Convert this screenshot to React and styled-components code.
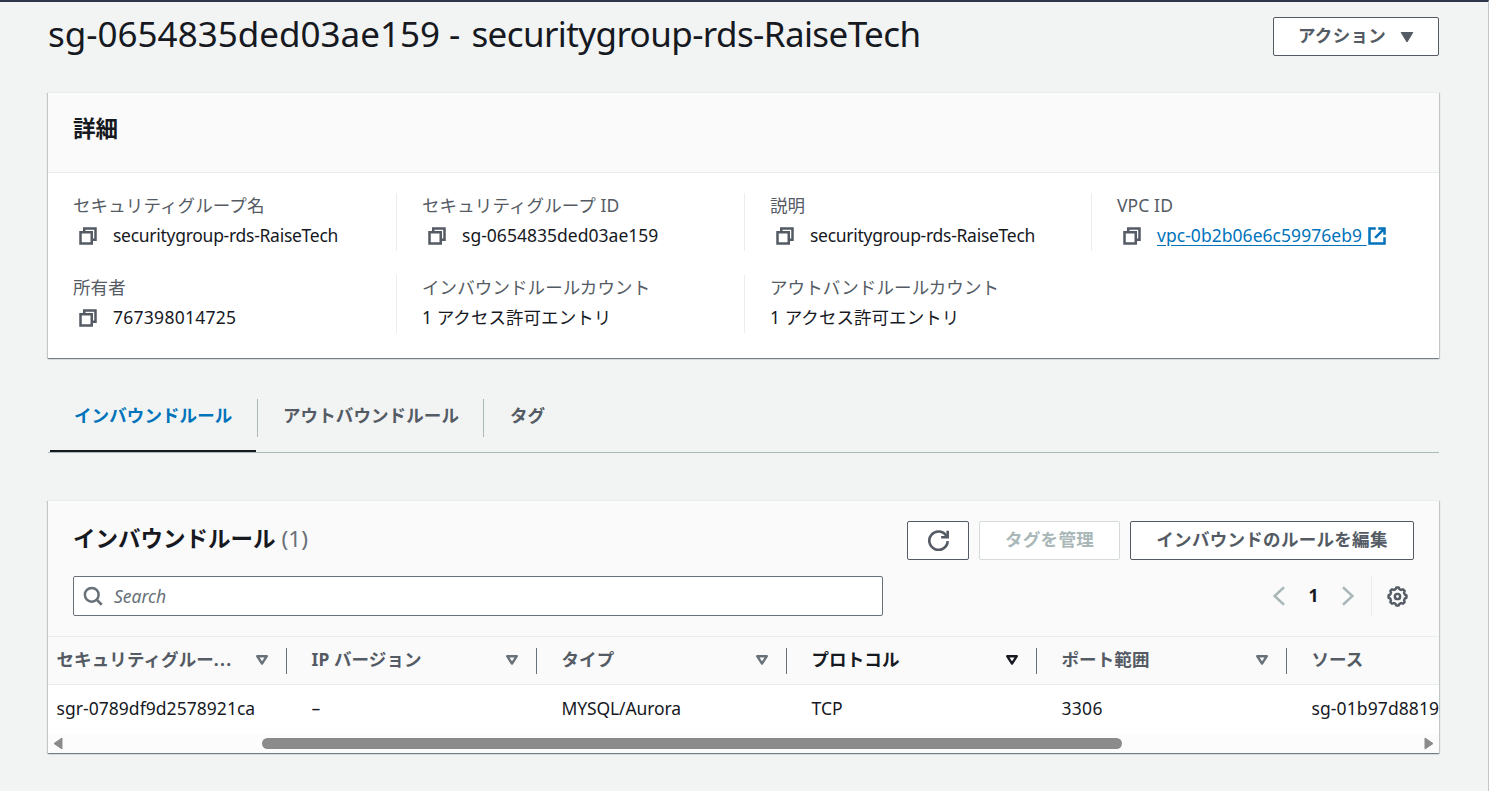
import React from "react";
import styled, { createGlobalStyle, css } from "styled-components";

const Global = createGlobalStyle`
  *, *::before, *::after { box-sizing: border-box; }
  html, body { margin: 0; height: 100%; overflow: hidden; }
  body {
    background: #f2f3f3;
    color: #16191f;
    font-family: "Noto Sans", "Noto Sans CJK JP", sans-serif;
    font-size: 17.5px;
    line-height: 26px;
  }
  h1, h2, p, dl, dt, dd { margin: 0; font-weight: 400; }
  button { font: inherit; }
  svg { flex: none; display: block; }
`;

const Page = styled.main`
  height: 791px;
  border-top: 2px solid #2d3646;
  border-right: 1px solid #bfc5c9;
  padding: 15px 49px 0 48px;
`;

const PageHeader = styled.header`
  display: flex;
  justify-content: space-between;
  align-items: flex-start;
  height: 75px;
`;

const PageTitle = styled.h1`
  font-size: 35px;
  line-height: 40px;
  margin-top: -3px;
  white-space: nowrap;
`;

const TitleName = styled.span`
  margin-left: 2px;
  letter-spacing: -0.6px;
`;

const Button = styled.button`
  display: flex;
  align-items: center;
  justify-content: center;
  gap: 14px;
  width: ${(p) => p.$width}px;
  height: 39px;
  padding: 0 0 ${(p) => (p.$icon ? 0 : 4)}px;
  background: #fff;
  border: 1px solid ${(p) => (p.disabled ? "#d5dbdb" : "#545b64")};
  border-radius: 2px;
  color: ${(p) => (p.disabled ? "#aab7b8" : "#545b64")};
  font-weight: 700;
  letter-spacing: 0.3px;
  white-space: nowrap;
`;

const Caret = styled.svg`
  position: relative;
  top: 2px;
`;

const Card = styled.section`
  background: #fff;
  border-top: 1px solid #eaeded;
  box-shadow: 0 1px 1px 0 rgba(0, 28, 36, 0.35), 1px 1px 1px 0 rgba(0, 28, 36, 0.15),
    -1px 1px 1px 0 rgba(0, 28, 36, 0.15);
`;

const CardHead = styled.header`
  height: 80px;
  padding: 23px 25px 0;
  background: #fafafa;
  border-bottom: 1px solid #eaeded;
`;

const CardTitle = styled.h2`
  font-size: 22.5px;
  line-height: 26px;
  padding-bottom: ${(p) => p.$lift || 0}px;
  font-weight: 700;
  white-space: nowrap;
`;

const Count = styled.span`
  margin-left: 6px;
  font-weight: 400;
  color: #687078;
`;

const DetailGrid = styled.dl`
  display: grid;
  grid-template-columns: 349px 348px 347px 1fr;
  row-gap: 24px;
  height: 185px;
  padding-top: 20px;
  overflow: hidden;
  align-content: start;
`;

const Detail = styled.div`
  height: 58px;
  padding-left: 25px;
  border-right: 1px solid ${(p) => (p.$last ? "transparent" : "#eaeded")};
`;

const Label = styled.dt`
  height: 30px;
  margin-top: -1px;
  margin-bottom: 1px;
  color: #545b64;
  letter-spacing: 0.1px;
  white-space: nowrap;
`;

const Value = styled.dd`
  display: flex;
  align-items: center;
  height: 26px;
  white-space: nowrap;
`;

const CopyButton = styled.span`
  display: flex;
  width: 40px;
  padding-left: 5px;
  color: #545b64;
`;

const Text = styled.span`
  padding-bottom: 2px;
  letter-spacing: ${(p) => p.$track || 0}px;
`;

const Link = styled.a`
  display: flex;
  align-items: center;
  color: #0073bb;
  text-decoration: underline;
  text-underline-offset: 3px;
`;

const TabBar = styled.nav`
  display: flex;
  margin-top: 40px;
  height: 55px;
  border-bottom: 1px solid #aab7b8;
  padding-left: 2px;
`;

const Tab = styled.a`
  width: ${(p) => p.$width}px;
  height: 54px;
  padding: 4px 0 0 ${(p) => p.$left || 24}px;
  font-weight: 700;
  letter-spacing: 0.1px;
  color: ${(p) => (p.$active ? "#0073bb" : "#545b64")};
  border-bottom: ${(p) => (p.$active ? "2px solid #16191f" : "0")};
`;

const TabDivider = styled.i`
  width: 1px;
  height: 38px;
  margin: 1px 2px 0 1px;
  background: #aab7b8;
`;

const TableCard = styled(Card)`
  margin-top: 47px;
  height: 253px;
  overflow: hidden;
`;

const TableHead = styled.header`
  height: 136px;
  padding: 20px 25px 0;
  background: #fafafa;
  border-bottom: 1px solid #eaeded;
`;

const Row = styled.div`
  display: flex;
  justify-content: space-between;
  align-items: center;
  margin-top: ${(p) => p.$top || 0}px;
`;

const Actions = styled.div`
  display: flex;
  gap: 10px;
`;

const SearchBox = styled.div`
  display: flex;
  align-items: center;
  gap: 11px;
  width: 810px;
  height: 40px;
  padding-left: 9px;
  background: #fff;
  border: 1px solid #687078;
  border-radius: 2px;
  color: #687078;
  font-style: italic;
`;

const Pager = styled.div`
  display: flex;
  align-items: center;
  height: 40px;
  color: #aab7b8;
`;

const PageNumber = styled.b`
  width: 49px;
  padding-bottom: 2px;
  text-align: center;
  color: #16191f;
`;

const Preferences = styled.span`
  display: flex;
  align-items: center;
  height: 40px;
  margin-left: 13px;
  padding: 0 6px 0 15px;
  border-left: 1px solid #eaeded;
  color: #545b64;
`;

const Grid = styled.div`
  display: grid;
  grid-template-columns: 239px repeat(4, 250px) 152px;
  height: ${(p) => (p.$head ? 48 : 49)}px;
  overflow: hidden;
  ${(p) =>
    p.$head &&
    css`
      background: #fafafa;
      border-bottom: 1px solid #eaeded;
      font-weight: 700;
    `}
`;

const Cell = styled.div`
  display: flex;
  align-items: center;
  justify-content: space-between;
  padding: 0 0 1px ${(p) => (p.$first ? 8.5 : 24.5)}px;
  white-space: nowrap;
`;

const HeadCell = styled(Cell)`
  padding-bottom: 0;
  color: ${(p) => (p.$sorted ? "#16191f" : "#545b64")};
`;

const HeadName = styled.span`
  padding-bottom: 4px;
  letter-spacing: 0.1px;
`;

const Ellipsis = styled.span`
  letter-spacing: 1.3px;
`;

const SortMark = styled.span`
  display: flex;
  align-items: center;
  width: 32px;
  height: 26px;
  padding-bottom: 1px;
  color: ${(p) => (p.$sorted ? "#16191f" : "#687078")};
  border-right: 1px solid #687078;
`;

const ScrollBar = styled.div`
  display: flex;
  align-items: center;
  justify-content: space-between;
  height: 19px;
  padding: 0 5px;
  background: #fcfcfc;
`;

const Thumb = styled.div`
  width: 860px;
  height: 11px;
  margin-right: 103px;
  border-radius: 6px;
  background: #8b8b8b;
`;

const Icon = ({ size = 20, children, width = 2 }) => (
  <svg width={size} height={size} viewBox="0 0 16 16" fill="none" stroke="currentColor" strokeWidth={width}>
    {children}
  </svg>
);

const Copy = () => (
  <CopyButton>
    <Icon>
      <path d="M2 5h9v9H2z" />
      <path d="M5 5V2h9v9h-3" />
    </Icon>
  </CopyButton>
);

const details = [
  { label: "セキュリティグループ名", value: "securitygroup-rds-RaiseTech", copy: true, track: -0.28 },
  { label: "セキュリティグループ ID", value: "sg-0654835ded03ae159", copy: true, track: 0.02 },
  { label: "説明", value: "securitygroup-rds-RaiseTech", copy: true, track: -0.28 },
  { label: "VPC ID", value: "vpc-0b2b06e6c59976eb9", copy: true, link: true, track: 0.04 },
  { label: "所有者", value: "767398014725", copy: true, track: 0.27 },
  { label: "インバウンドルールカウント", value: "1 アクセス許可エントリ", track: 0.05 },
  { label: "アウトバンドルールカウント", value: "1 アクセス許可エントリ", track: 0.05 },
];

const columns = [
  { name: "セキュリティグルー", cut: true, value: "sgr-0789df9d2578921ca", track: 0.04 },
  { name: "IP バージョン", value: "–" },
  { name: "タイプ", value: "MYSQL/Aurora", track: -0.12 },
  { name: "プロトコル", value: "TCP", sorted: true },
  { name: "ポート範囲", value: "3306", track: 0.3 },
  { name: "ソース", value: "sg-01b97d8819", track: 0.1 },
];

// Outline of a wheel with eight rounded teeth, centred in a 16-unit box.
const gear = (() => {
  const pts = [];
  for (let i = 0; i < 96; i++) {
    const a = (i / 96) * Math.PI * 2;
    const r = 6.3 + 0.55 * Math.tanh(3 * Math.cos(8 * a));
    pts.push(`${(8 + r * Math.cos(a)).toFixed(2)} ${(8 + r * Math.sin(a)).toFixed(2)}`);
  }
  return `M${pts.join("L")}Z`;
})();

export default function App() {
  return (
    <>
      <Global />
      <Page>
        <PageHeader>
          <PageTitle>
            sg-0654835ded03ae159 - <TitleName>securitygroup-rds-RaiseTech</TitleName>
          </PageTitle>
          <Button $width={166}>
            アクション
            <Caret width="14" height="12" viewBox="0 0 14 12">
              <path d="M1.2 1.500h11.600L7 11z" fill="currentColor" stroke="currentColor" strokeLinejoin="round" />
            </Caret>
          </Button>
        </PageHeader>

        <Card>
          <CardHead>
            <CardTitle>詳細</CardTitle>
          </CardHead>
          <DetailGrid>
            {details.map((d, i) => (
              <Detail key={i} $last={i === 3 || i === 6}>
                <Label>{d.label}</Label>
                <Value>
                  {d.copy && <Copy />}
                  {d.link ? (
                    <Link>
                      <Text $track={d.track}>{d.value}{"\u00a0"}</Text>
                      <Icon>
                        <path d="M14 9v5H2V2h5" />
                        <path d="M9 2h5v5M6.500 9.500L13.500 2.500" />
                      </Icon>
                    </Link>
                  ) : (
                    <Text $track={d.track}>{d.value}</Text>
                  )}
                </Value>
              </Detail>
            ))}
          </DetailGrid>
        </Card>

        <TabBar>
          <Tab $active $width={206}>インバウンドルール</Tab>
          <TabDivider />
          <Tab $width={222} $left={23}>アウトバウンドルール</Tab>
          <TabDivider />
          <Tab $width={90}>タグ</Tab>
        </TabBar>

        <TableCard>
          <TableHead>
            <Row>
              <CardTitle $lift={4}>
                インバウンドルール<Count>(1)</Count>
              </CardTitle>
              <Actions>
                <Button $width={62} $icon>
                  <Icon size={21}>
                    <path d="M10 5.500h5V.500" />
                    <path d="M15 8.500a7 7 0 1 1-.9-3.800" />
                  </Icon>
                </Button>
                <Button $width={141} disabled>タグを管理</Button>
                <Button $width={284}>インバウンドのルールを編集</Button>
              </Actions>
            </Row>
            <Row $top={16}>
              <SearchBox>
                <Icon>
                  <circle cx="7" cy="7" r="5.5" />
                  <path d="M15 15l-4.200-4.200" />
                </Icon>
                Search
              </SearchBox>
              <Pager>
                <Icon>
                  <path d="M12 1L4.500 8l7.500 7" />
                </Icon>
                <PageNumber>1</PageNumber>
                <Icon>
                  <path d="M4 1l7.500 7L4 15" />
                </Icon>
                <Preferences>
                  <Icon size={21} width={1.9}>
                    <path d={gear} />
                    <circle cx="8" cy="8" r="2" />
                  </Icon>
                </Preferences>
              </Pager>
            </Row>
          </TableHead>
          <Grid $head>
            {columns.map((c, i) => (
              <HeadCell key={i} $first={i === 0} $sorted={c.sorted}>
                <HeadName>
                  {c.name}
                  {c.cut && <Ellipsis>...</Ellipsis>}
                </HeadName>
                {i < 5 && (
                  <SortMark $sorted={c.sorted}>
                    <svg width="14" height="12" viewBox="0 0 14 12" fill="none" stroke="currentColor" strokeWidth="2.4">
                      <path d="M2.200 2.200h9.600L7 9.600z" strokeLinejoin="round" />
                    </svg>
                  </SortMark>
                )}
              </HeadCell>
            ))}
          </Grid>
          <Grid>
            {columns.map((c, i) => (
              <Cell key={i} $first={i === 0}>
                <Text $track={c.track}>{c.value}</Text>
              </Cell>
            ))}
          </Grid>
          <ScrollBar>
            <svg width="10" height="13" viewBox="0 0 10 13">
              <path d="M9 1v11L1 6.500z" fill="#8b8b8b" stroke="#8b8b8b" strokeLinejoin="round" />
            </svg>
            <Thumb />
            <svg width="10" height="13" viewBox="0 0 10 13">
              <path d="M1 1v11l8-5.500z" fill="#8b8b8b" stroke="#8b8b8b" strokeLinejoin="round" />
            </svg>
          </ScrollBar>
        </TableCard>
      </Page>
    </>
  );
}
